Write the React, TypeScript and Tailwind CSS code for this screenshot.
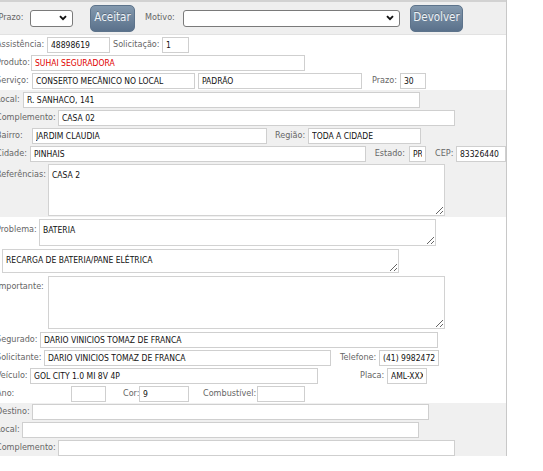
import React from "react";

const F = "font-['DejaVu_Sans_Condensed','DejaVu_Sans',sans-serif] text-[9px]";

function Lb({ w, children, top }: { w: string; children?: React.ReactNode; top?: boolean }) {
  return (
    <span className={`inline-block shrink-0 whitespace-nowrap text-[#666] ${w} ${top ? "pt-[4px] self-start" : ""}`}>
      {children}
    </span>
  );
}

function In({ w, value, red, cls }: { w: string; value?: string; red?: boolean; cls?: string }) {
  return (
    <input
      readOnly
      value={value ?? ""}
      className={`${w} h-[16px] shrink-0 border border-[#cfcfcf] bg-white px-[3px] text-[8.5px] leading-[14px] outline-none overflow-hidden ${red ? "text-[#e00000]" : "text-[#111]"} ${cls ?? ""}`}
    />
  );
}

function Ta({ w, h, value }: { w: string; h: string; value?: string }) {
  return (
    <textarea
      readOnly
      value={value ?? ""}
      className={`${w} ${h} shrink-0 block border border-[#d2d2d2] bg-white px-[3px] pt-[5px] text-[8.5px] leading-[11px] text-[#111] outline-none`}
    />
  );
}

function Sel({ w }: { w: string }) {
  return (
    <div className={`${w} h-[17px] shrink-0 flex items-center justify-end rounded-[3px] border border-[#7a7a7a] bg-white pr-[5px]`}>
      <svg width="8" height="6" viewBox="0 0 8 6">
        <polyline points="1,1.2 4,4.2 7,1.2" fill="none" stroke="#111" strokeWidth="1.9" />
      </svg>
    </div>
  );
}

function Btn({ w, children }: { w: string; children: React.ReactNode }) {
  return (
    <div
      className={`${w} h-[27px] shrink-0 flex items-center justify-center rounded-[5px] border border-[#5d738b] bg-linear-to-b from-[#8499ae] to-[#5a718b] text-[11.5px] text-[#eef3f7] font-['Liberation_Sans_Narrow','DejaVu_Sans_Condensed',sans-serif] [text-shadow:0_-1px_0_rgba(0,0,0,0.25)]`}
    >
      {children}
    </div>
  );
}

const Row = ({ children, cls }: { children: React.ReactNode; cls?: string }) => (
  <div className={`flex items-center h-[16px] ${cls ?? ""}`}>{children}</div>
);

export default function App() {
  return (
    <div className={`w-[543px] h-[471px] overflow-hidden bg-white ${F}`}>
      <div className="w-[511px] -ml-[4px] border-r border-[#c8c8c8]">
        {/* top bar */}
        <div className="h-[35px] border-t-2 border-[#d2d2d2] bg-[#efefef] border-b border-b-[#e2e2e2] flex items-center">
          <Lb w="w-[34px]">&nbsp;Prazo:</Lb>
          <Sel w="w-[43px]" />
          <div className="ml-[17px]">
            <Btn w="w-[45px]">Aceitar</Btn>
          </div>
          <span className="ml-[10px] inline-block w-[38px] text-[#666]">Motivo:</span>
          <Sel w="w-[217px]" />
          <div className="ml-[10px]">
            <Btn w="w-[53px]">Devolver</Btn>
          </div>
        </div>

        {/* section A */}
        <div className="bg-white pt-[2px] pb-[1px] flex flex-col gap-[2px]">
          <Row>
            <Lb w="w-[51px]">Assistência:</Lb>
            <In w="w-[63px]" value="48898619" />
            <span className="ml-[3px] inline-block w-[49px] text-[#666]">Solicitação:</span>
            <In w="w-[27px]" value="1" />
          </Row>
          <Row>
            <Lb w="w-[35px]">Produto:</Lb>
            <In w="w-[274px]" value="SUHAI SEGURADORA" red />
          </Row>
          <Row>
            <Lb w="w-[36px]">Serviço:</Lb>
            <In w="w-[163px]" value="CONSERTO MECÂNICO NO LOCAL" />
            <In w="w-[164px]" value="PADRÃO" cls="ml-[3px]" />
            <span className="ml-[10px] inline-block w-[28px] text-[#666]">Prazo:</span>
            <In w="w-[26px]" value="30" />
          </Row>
        </div>

        {/* section B */}
        <div className="bg-[#f0f0f0] pt-[2px] pb-[1px] flex flex-col gap-[2px]">
          <Row>
            <Lb w="w-[27px]">Local:</Lb>
            <In w="w-[397px]" value="R. SANHACO, 141" />
          </Row>
          <Row>
            <Lb w="w-[62px]">Complemento:</Lb>
            <In w="w-[397px]" value="CASA 02" />
          </Row>
          <Row>
            <Lb w="w-[36px]">Bairro:</Lb>
            <In w="w-[235px]" value="JARDIM CLAUDIA" />
            <span className="ml-[8px] inline-block w-[33px] text-[#666]">Região:</span>
            <In w="w-[113px]" value="TODA A CIDADE" />
          </Row>
          <Row>
            <Lb w="w-[34px]">Cidade:</Lb>
            <In w="w-[336px]" value="PINHAIS" />
            <span className="ml-[3px] inline-block w-[40px] text-right pr-[4px] text-[#666]">Estado:</span>
            <In w="w-[17px]" value="PR" cls="px-[2px]" />
            <span className="ml-[9px] inline-block w-[21px] text-[#666]">CEP:</span>
            <In w="w-[50px]" value="83326440" />
          </Row>
          <div className="flex">
            <Lb w="w-[52px]" top>Referências:</Lb>
            <Ta w="w-[397px]" h="h-[52px]" value="CASA 2" />
          </div>
        </div>

        {/* section C */}
        <div className="bg-white pt-[2px] pb-[1px] flex flex-col">
          <div className="flex">
            <Lb w="w-[43px]" top>Problema:</Lb>
            <Ta w="w-[397px]" h="h-[27px]" value="BATERIA" />
          </div>
          <div className="flex mt-[3px] pl-[6px]">
            <Ta w="w-[397px]" h="h-[24px]" value="RECARGA DE BATERIA/PANE ELÉTRICA" />
          </div>
          <div className="flex mt-[3px]">
            <Lb w="w-[52px]" top>Importante:</Lb>
            <Ta w="w-[397px]" h="h-[53px]" />
          </div>
          <div className="flex flex-col gap-[2px] mt-[3px]">
            <Row>
              <Lb w="w-[44px]">Segurado:</Lb>
              <In w="w-[398px]" value="DARIO VINICIOS TOMAZ DE FRANCA" />
            </Row>
            <Row>
              <Lb w="w-[48px]">Solicitante:</Lb>
              <In w="w-[287px]" value="DARIO VINICIOS TOMAZ DE FRANCA" />
              <span className="ml-[9px] inline-block w-[39px] text-[#666]">Telefone:</span>
              <In w="w-[60px]" value="(41) 998247254" cls="px-[2px]" />
            </Row>
            <Row>
              <Lb w="w-[34px]">Veículo:</Lb>
              <In w="w-[288px]" value="GOL CITY 1.0 MI 8V 4P" />
              <span className="ml-[42px] inline-block w-[27px] text-[#666]">Placa:</span>
              <In w="w-[40px]" value="AML-XXXX" cls="px-[2px]" />
            </Row>
            <Row>
              <Lb w="w-[75px]">Ano:</Lb>
              <In w="w-[35px]" />
              <span className="ml-[17px] inline-block w-[16px] text-[#666]">Cor:</span>
              <In w="w-[50px]" value="9" cls="px-[2px]" />
              <span className="ml-[14px] inline-block w-[54px] text-[#666]">Combustível:</span>
              <In w="w-[48px]" />
            </Row>
          </div>
        </div>

        {/* section D */}
        <div className="bg-[#f0f0f0] pt-[1px] flex flex-col gap-[2px]">
          <Row>
            <Lb w="w-[36px]">Destino:</Lb>
            <In w="w-[397px]" />
          </Row>
          <Row>
            <Lb w="w-[26px]">Local:</Lb>
            <In w="w-[397px]" />
          </Row>
          <Row>
            <Lb w="w-[62px]">Complemento:</Lb>
            <In w="w-[397px]" />
          </Row>
        </div>
      </div>
    </div>
  );
}
